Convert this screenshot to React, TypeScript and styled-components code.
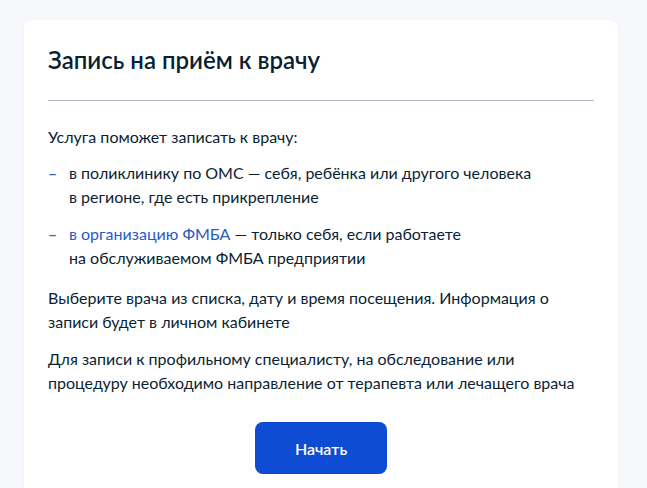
import React from "react";
import styled, { createGlobalStyle } from "styled-components";

const Global = createGlobalStyle`
  html, body { margin: 0; padding: 0; background: #f6f8fb; }
  body { font-family: Lato, "Noto Sans", sans-serif; color: #0b1f33; }
  * { box-sizing: border-box; }
`;

const Page = styled.div`
  padding: 20px 29px 0 24px;
  min-height: 488px;
`;

const Card = styled.section`
  background: #ffffff;
  border-radius: 8px;
  padding: 24px 24px 40px;
  box-shadow: 0 1px 4px rgba(11, 31, 51, 0.04);
`;

const Title = styled.h1`
  margin: 0;
  font-size: 24px;
  line-height: 32px;
  font-weight: 600;
  color: #0b1f33;
`;

const Divider = styled.hr`
  border: 0;
  height: 1px;
  background: #b0b9c3;
  margin: 24px 0 24px;
`;

const Para = styled.p<{ $gap?: number }>`
  margin: 0 0 ${(p) => p.$gap ?? 12}px;
  font-size: 16px;
  line-height: 24px;
`;

const List = styled.ul`
  list-style: none;
  margin: 0 0 16px;
  padding: 0;
  display: flex;
  flex-direction: column;
  gap: 13px;
`;

const Item = styled.li`
  display: flex;
  font-size: 16px;
  line-height: 24px;
`;

const Dash = styled.span`
  flex: 0 0 21px;
  color: #3f68c4;
  font-weight: 700;
`;

const Link = styled.a`
  color: #2b59c3;
  text-decoration: none;
`;

const Actions = styled.div`
  display: flex;
  justify-content: center;
  margin-top: 27px;
`;

const Button = styled.button`
  width: 132px;
  height: 52px;
  border: 0;
  border-radius: 8px;
  background: #0d4cd3;
  color: #ffffff;
  font-family: Lato, "Noto Sans", sans-serif;
  font-size: 16px;
  font-weight: 600;
  cursor: pointer;
`;

export default function App() {
  return (
    <>
      <Global />
      <Page>
        <Card>
          <Title>Запись на приём к врачу</Title>
          <Divider />
          <Para>Услуга поможет записать к врачу:</Para>
          <List>
            <Item>
              <Dash>–</Dash>
              <span>
                в поликлинику по ОМС — себя, ребёнка или другого человека
                <br />в регионе, где есть прикрепление
              </span>
            </Item>
            <Item>
              <Dash>–</Dash>
              <span>
                <Link href="#">в организацию ФМБА</Link> — только себя, если работаете
                <br />на обслуживаемом ФМБА предприятии
              </span>
            </Item>
          </List>
          <Para $gap={13}>
            Выберите врача из списка, дату и время посещения. Информация о записи будет в личном кабинете
          </Para>
          <Para $gap={0}>
            Для записи к профильному специалисту, на обследование или процедуру необходимо направление от терапевта или лечащего врача
          </Para>
          <Actions>
            <Button>Начать</Button>
          </Actions>
        </Card>
      </Page>
    </>
  );
}
